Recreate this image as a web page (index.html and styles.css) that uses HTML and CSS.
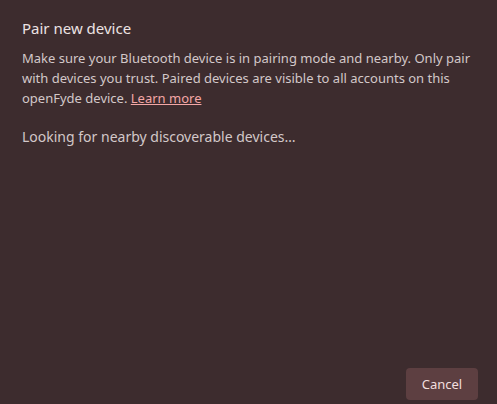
FILE: index.html
```html
<!DOCTYPE html>
<html>
<head>
<meta charset="utf-8">
<link rel="stylesheet" href="styles.css">
</head>
<body>
<div class="dialog">
  <div class="content">
    <h1 class="title">Pair new device</h1>
    <p class="desc">Make sure your Bluetooth device is in pairing mode and nearby. Only pair with devices you trust. Paired devices are visible to all accounts on this openFyde device. <a class="link" href="#">Learn more</a></p>
    <p class="status">Looking for nearby discoverable devices…</p>
  </div>
  <div class="footer">
    <button class="btn">Cancel</button>
  </div>
</div>
</body>
</html>
```

FILE: styles.css
```css
html, body {
  margin: 0;
  padding: 0;
  height: 100%;
  background: #3d2c2e;
}
body {
  font-family: "Noto Sans", sans-serif;
}
.dialog {
  height: 404px;
  display: flex;
  flex-direction: column;
  box-sizing: border-box;
}
.content {
  flex: 1;
  padding: 18px 22px 0 22px;
}
.title {
  margin: 0;
  font-size: 15px;
  font-weight: 400;
  line-height: 20px;
  color: #ece3e3;
}
.desc {
  margin: 10px 0 0 0;
  font-size: 13px;
  line-height: 20px;
  color: #d3c8c9;
}
.link {
  color: #f4a7a6;
  text-decoration: underline;
}
.status {
  margin: 19px 0 0 0;
  font-size: 14px;
  line-height: 20px;
  color: #d3c8c9;
}
.footer {
  display: flex;
  justify-content: flex-end;
  padding: 0 19px 4px 0;
}
.btn {
  width: 72px;
  height: 32px;
  border: none;
  border-radius: 4px;
  background: #5d3f41;
  color: #f1dede;
  font-family: "Noto Sans", sans-serif;
  font-size: 13px;
  padding: 0;
}
```
